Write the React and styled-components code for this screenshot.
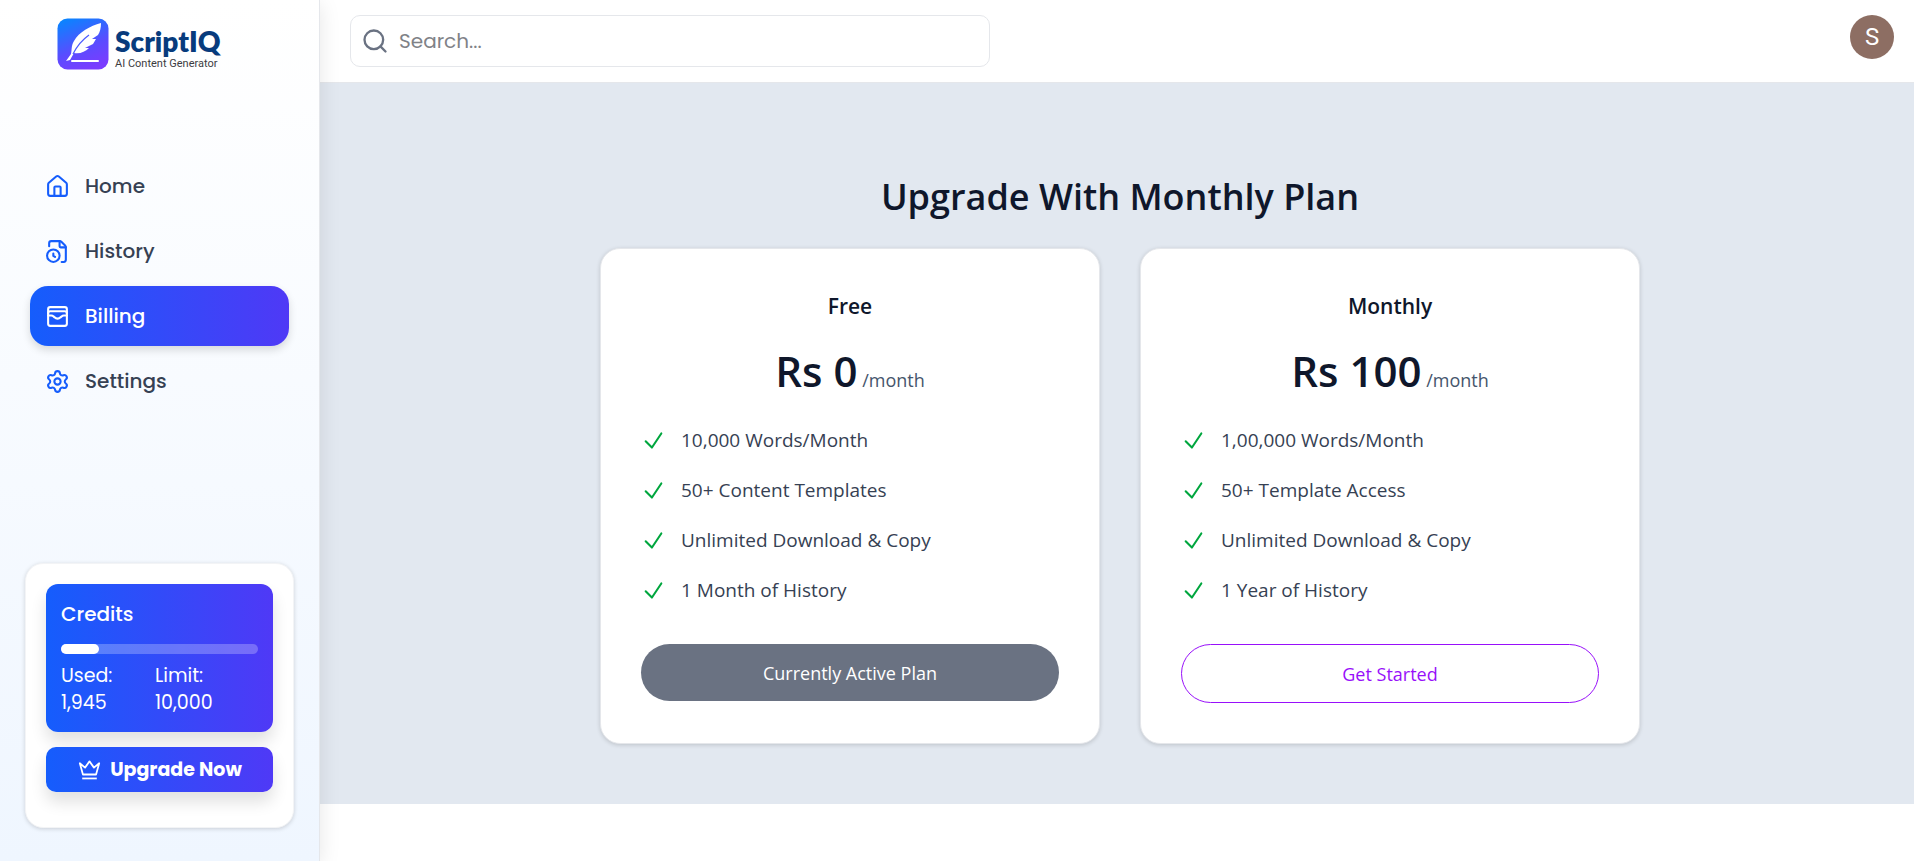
import React from "react";
import styled, { createGlobalStyle } from "styled-components";
import { House, FileClock, WalletCards, Settings, Search } from "lucide-react";

const poppins = `Poppins, "Open Sans", sans-serif`;
const segoe = `"Segoe UI", "Open Sans", "Noto Sans", sans-serif`;
const accent = "linear-gradient(to right, #155dfc, #4f39f6)";

const GlobalStyle = createGlobalStyle`
  *, *::before, *::after { box-sizing: border-box; }
  body { margin: 0; background: #fff; color: #0f172b; font-family: ${segoe}; }
  h1, h2, p, ul { margin: 0; padding: 0; }
  ul { list-style: none; }
  button, input { font: inherit; }
`;

const Page = styled.div`
  display: flex;
  min-height: 100vh;
`;

const Sidebar = styled.aside`
  display: flex;
  flex-direction: column;
  flex: none;
  width: 320px;
  padding: 18px 25px 33px;
  border-right: 1px solid #e5e7eb;
  background: linear-gradient(to bottom, #fff, #eff6ff);
  box-shadow: 0 4px 20px rgba(0, 0, 0, 0.1);
  font-family: ${poppins};
  z-index: 1;
`;

const Brand = styled.a`
  display: flex;
  gap: 6px;
  margin-left: 32px;
  color: #073b7d;
  text-decoration: none;
`;

const BrandText = styled.span`
  display: flex;
  flex-direction: column;
  padding-top: 7px;
`;

const BrandName = styled.span`
  font: 800 28px/32px Lato, sans-serif;
`;

const Tagline = styled.span`
  color: #3c3c3f;
  font: 400 11px/14px Roboto, sans-serif;
`;

const Nav = styled.nav`
  display: flex;
  flex-direction: column;
  gap: 5px;
  margin: 85px 5px 0;
`;

const NavLink = styled.a`
  display: flex;
  align-items: center;
  gap: 15px;
  height: 60px;
  padding: 0 15px;
  border-radius: 18px;
  background: ${(p) => (p.$active ? accent : "none")};
  box-shadow: ${(p) => (p.$active ? "0 4px 8px rgba(0, 0, 0, 0.14)" : "none")};
  color: ${(p) => (p.$active ? "#fff" : "#364153")};
  font-size: 20px;
  font-weight: 500;
  text-decoration: none;

  svg { color: ${(p) => (p.$active ? "#fff" : "#155dfc")}; }
`;

const UsageCard = styled.section`
  display: flex;
  flex-direction: column;
  gap: 15px;
  margin-top: auto;
  padding: 20px 20px 35px;
  border: 1px solid #f3f4f6;
  border-radius: 18px;
  background: #fff;
  box-shadow: 0 1px 4px rgba(0, 0, 0, 0.16);
`;

const Credits = styled.div`
  padding: 15px 15px 16px;
  border-radius: 12px;
  background: ${accent};
  box-shadow: 0 10px 16px rgba(0, 0, 0, 0.12);
  color: #fff;
`;

const CreditsTitle = styled.h2`
  font-size: 20px;
  line-height: 30px;
  font-weight: 500;
`;

const Track = styled.div`
  height: 10px;
  margin: 15px 0 8px;
  border-radius: 5px;
  background: rgba(255, 255, 255, 0.25);
`;

const Fill = styled.div`
  height: 100%;
  border-radius: 5px;
  background: #fff;
`;

const Figures = styled.div`
  display: grid;
  grid-template-columns: 94px 1fr;
  font-size: 19px;
  line-height: 27px;
`;

const UpgradeButton = styled.button`
  display: flex;
  align-items: center;
  justify-content: center;
  gap: 8px;
  height: 45px;
  border: 0;
  border-radius: 10px;
  background: ${accent};
  box-shadow: 0 10px 16px rgba(0, 0, 0, 0.12);
  color: #fff;
  font-size: 19px;
  font-weight: 700;
`;

const Content = styled.div`
  flex: 1;
  min-width: 0;
`;

const TopBar = styled.header`
  display: flex;
  align-items: flex-start;
  justify-content: space-between;
  height: 83px;
  padding: 15px 20px 0 30px;
  border-bottom: 1px solid #e5e7eb;
`;

const SearchBox = styled.label`
  display: flex;
  align-items: center;
  gap: 8px;
  width: 640px;
  height: 52px;
  padding: 0 10px;
  border: 1px solid #e5e7eb;
  border-radius: 10px;
  color: #6a7282;
`;

const SearchInput = styled.input`
  flex: 1;
  min-width: 0;
  border: 0;
  outline: 0;
  background: none;
  font: 400 20px/30px ${poppins};

  &::placeholder { color: #808287; opacity: 1; }
`;

const Avatar = styled.button`
  width: 44px;
  height: 44px;
  padding: 0;
  border: 0;
  border-radius: 50%;
  background: #8d6e63;
  color: #fff;
  font: 400 24px/44px Roboto, sans-serif;
`;

const Billing = styled.main`
  padding: 90px 40px 60px 46px;
  background: #e2e8f0;
`;

const Heading = styled.h1`
  margin-bottom: 27px;
  font-size: 36px;
  line-height: 48px;
  font-weight: 600;
  text-align: center;
`;

const Plans = styled.div`
  display: flex;
  justify-content: center;
  gap: 40px;
`;

const PlanCard = styled.section`
  display: flex;
  flex-direction: column;
  flex: 0 1 500px;
  padding: 40px;
  border: 1px solid #e5e7eb;
  border-radius: 20px;
  background: #fff;
  box-shadow: 0 1px 4px rgba(0, 0, 0, 0.16);
`;

const PlanName = styled.h2`
  font-size: 21px;
  line-height: 35px;
  font-weight: 600;
  text-align: center;
`;

const Price = styled.p`
  margin-top: 22px;
  color: #45556c;
  font-size: 18px;
  line-height: 50px;
  text-align: center;
`;

const Amount = styled.strong`
  color: #0f172b;
  font-size: 42px;
  font-weight: 600;
`;

const Features = styled.ul`
  display: flex;
  flex-direction: column;
  gap: 20px;
  margin-top: 20px;
`;

const Feature = styled.li`
  display: flex;
  align-items: center;
  gap: 15px;
  color: #364153;
  font-size: 19px;
  line-height: 30px;

  svg { color: #00a63e; }
`;

const PlanButton = styled.button`
  flex: none;
  height: ${(p) => (p.$active ? 57 : 59)}px;
  margin-top: 39px;
  border: ${(p) => (p.$active ? "0" : "1px solid #9810fa")};
  border-radius: 30px;
  background: ${(p) => (p.$active ? "#6a7282" : "#fff")};
  color: ${(p) => (p.$active ? "#fff" : "#9810fa")};
  font-size: 18px;
`;

const Logo = () => (
  <svg width="52" height="52" viewBox="0 0 52 52" aria-hidden="true">
    <defs>
      <linearGradient id="logo" x1="0.2" y1="0" x2="0.6" y2="1">
        <stop offset="0" stopColor="#0a84ff" />
        <stop offset="0.6" stopColor="#5a4cff" />
        <stop offset="1" stopColor="#7a3cff" />
      </linearGradient>
    </defs>
    <rect x="0.5" y="0.5" width="51" height="51" rx="10" fill="url(#logo)" />
    <path d="M44 5C33 8 22 14 17 23c-3 5-2 9-3 13l-5 7 4-1 4-7c6 1 11-1 15-5l-4 0 8-4 3-5-4 0 6-4c2-3 3-7 3-12z" fill="#fff" />
    <path d="M16 36c4-8 9-14 16-19" fill="none" stroke="#4c5cff" strokeWidth="1.3" />
    <path d="M15 43h26" stroke="#fff" strokeWidth="2" strokeLinecap="round" />
  </svg>
);

const Crown = () => (
  <svg width="25" height="25" viewBox="0 0 24 24" fill="none" stroke="currentColor" strokeWidth="1.7" aria-hidden="true">
    <path d="M2.7 6l3 10.8h12.6l3-10.8-5 4.2L12 4.2l-4.3 6z" strokeLinejoin="round" />
    <path d="M5 20.6h14" />
  </svg>
);

const Check = () => (
  <svg width="25" height="25" viewBox="0 0 24 24" fill="none" stroke="currentColor" strokeWidth="2" strokeLinecap="round" strokeLinejoin="round" aria-hidden="true">
    <path d="m4.5 12.75 6 6 9-13.5" />
  </svg>
);

const navItems = [
  { label: "Home", icon: House },
  { label: "History", icon: FileClock },
  { label: "Billing", icon: WalletCards, active: true },
  { label: "Settings", icon: Settings },
];

const plans = [
  {
    name: "Free",
    amount: "Rs 0",
    features: ["10,000 Words/Month", "50+ Content Templates", "Unlimited Download & Copy", "1 Month of History"],
    action: "Currently Active Plan",
    active: true,
  },
  {
    name: "Monthly",
    amount: "Rs 100",
    features: ["1,00,000 Words/Month", "50+ Template Access", "Unlimited Download & Copy", "1 Year of History"],
    action: "Get Started",
  },
];

const used = 1945;
const limit = 10000;

export default function App() {
  return (
    <Page>
      <GlobalStyle />
      <Sidebar>
        <Brand href="#">
          <Logo />
          <BrandText>
            <BrandName>ScriptIQ</BrandName>
            <Tagline>AI Content Generator</Tagline>
          </BrandText>
        </Brand>
        <Nav>
          {navItems.map(({ label, icon: Icon, active }) => (
            <NavLink key={label} href="#" $active={active} aria-current={active ? "page" : undefined}>
              <Icon size={25} />
              {label}
            </NavLink>
          ))}
        </Nav>
        <UsageCard>
          <Credits>
            <CreditsTitle>Credits</CreditsTitle>
            <Track>
              <Fill style={{ width: `${(used / limit) * 100}%` }} />
            </Track>
            <Figures>
              <span>Used:<br />{used.toLocaleString("en-US")}</span>
              <span>Limit:<br />{limit.toLocaleString("en-US")}</span>
            </Figures>
          </Credits>
          <UpgradeButton type="button">
            <Crown />
            Upgrade Now
          </UpgradeButton>
        </UsageCard>
      </Sidebar>
      <Content>
        <TopBar>
          <SearchBox>
            <Search size={28} aria-hidden="true" />
            <SearchInput type="text" placeholder="Search..." aria-label="Search" />
          </SearchBox>
          <Avatar type="button">S</Avatar>
        </TopBar>
        <Billing>
          <Heading>Upgrade With Monthly Plan</Heading>
          <Plans>
            {plans.map((plan) => (
              <PlanCard key={plan.name}>
                <PlanName>{plan.name}</PlanName>
                <Price>
                  <Amount>{plan.amount}</Amount> /month
                </Price>
                <Features>
                  {plan.features.map((text) => (
                    <Feature key={text}>
                      <Check />
                      {text}
                    </Feature>
                  ))}
                </Features>
                <PlanButton type="button" $active={plan.active}>{plan.action}</PlanButton>
              </PlanCard>
            ))}
          </Plans>
        </Billing>
      </Content>
    </Page>
  );
}
